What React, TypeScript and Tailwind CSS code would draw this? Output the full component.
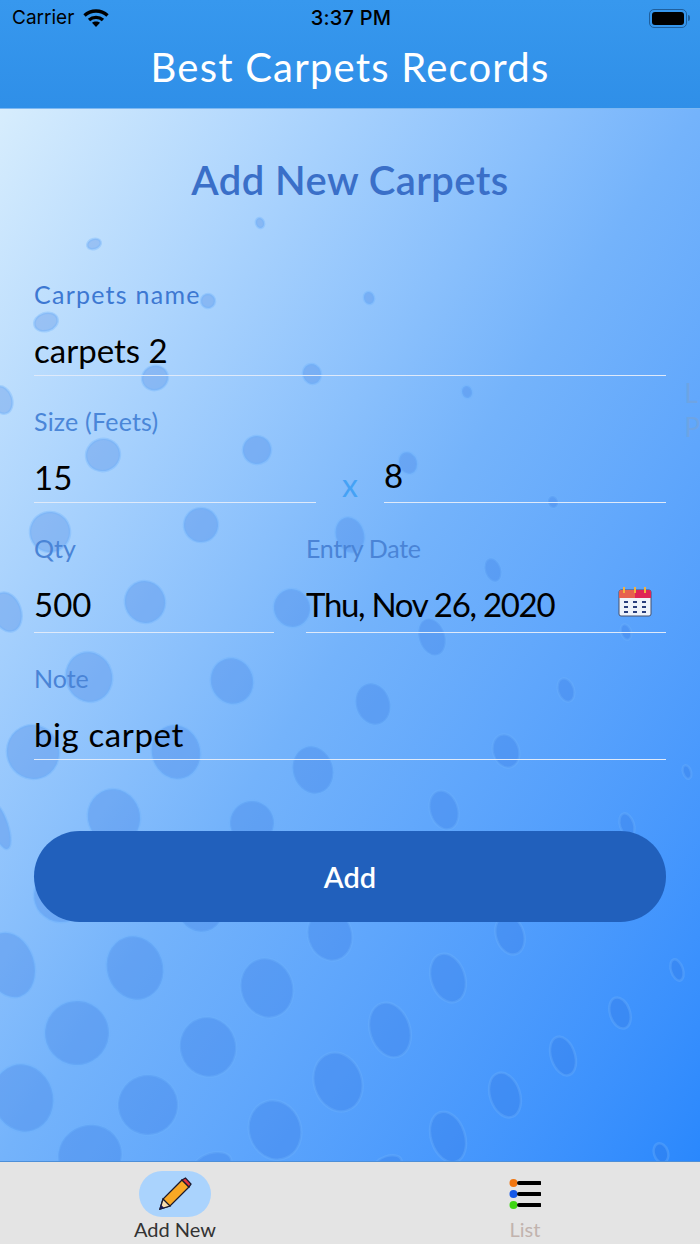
// Spots on the background, in page coordinates: cx, cy, rx, ry
const blobs: [number, number, number, number][] = [
  [260, 223, 4, 5], [94, 244, 7, 5], [208, 301, 7, 7], [46, 322, 12, 9], [369, 298, 5, 6], [155, 378, 13, 12],
  [312, 374, 9, 10], [467, 392, 5, 6], [2, 400, 10, 14], [103, 455, 17, 16], [257, 450, 14, 14], [408, 463, 9, 11],
  [553, 502, 5, 6], [50, 532, 20, 20], [201, 525, 17, 17], [350, 535, 14, 18], [493, 570, 8, 12], [7, 612, 14, 20],
  [145, 602, 20, 21], [292, 608, 18, 19], [432, 637, 13, 19], [626, 632, 5, 8], [89, 677, 23, 25], [232, 681, 21, 23],
  [373, 704, 17, 21], [566, 690, 8, 12], [33, 752, 26, 27], [176, 752, 24, 27], [506, 751, 13, 17], [687, 772, 4, 7],
  [313, 770, 20, 24], [444, 810, 14, 20], [114, 817, 26, 28], [252, 823, 22, 22], [627, 825, 7, 12], [0, 826, 8, 24],
  [62, 895, 28, 27], [200, 905, 24, 27], [330, 935, 22, 26], [510, 935, 14, 20], [448, 978, 17, 25], [677, 970, 6, 11],
  [390, 1030, 20, 28], [620, 1013, 10, 16], [563, 1056, 12, 20], [338, 1082, 24, 30], [505, 1095, 15, 23], [448, 1137, 17, 26],
  [388, 1164, 14, 8], [661, 1153, 7, 10], [10, 965, 24, 33], [135, 968, 28, 32], [267, 988, 26, 30], [77, 1033, 32, 32],
  [208, 1047, 28, 30], [23, 1098, 30, 34], [148, 1105, 30, 30], [275, 1130, 26, 30], [90, 1155, 32, 30], [212, 1165, 20, 12],
];

const font = { fontFamily: "Lato, 'Noto Sans', sans-serif" };

function Field({
  label,
  value,
  labelClass = "",
  valueClass = "",
  className = "",
}: {
  label: string;
  value: string;
  labelClass?: string;
  valueClass?: string;
  className?: string;
}) {
  return (
    <div className={className}>
      <div className={`text-[25px] leading-[30px] ${labelClass}`}>{label}</div>
      <div className={`border-b border-[#dfeafa] text-[33px] text-black ${valueClass}`}>{value}</div>
    </div>
  );
}

export default function App() {
  return (
    <div className="flex h-[1244px] w-[700px] flex-col overflow-hidden" style={font}>
      <header className="h-[109px] border-b border-[#7db8f2] bg-gradient-to-b from-[#3798ee] to-[#2f8fe8]">
        <div className="flex h-[36px] items-center justify-between pr-[10px] pl-[12px] font-['Inter'] text-black">
          <div className="flex w-[200px] items-center gap-[9px] text-[19px]">
            Carrier
            <svg width="26" height="20" viewBox="0 0 26 20" fill="none" stroke="#000" strokeWidth="3.4">
              <path d="M1.5 7.5C8 1.5 18 1.5 24.5 7.5" />
              <path d="M6 12C10 8.5 16 8.5 20 12" />
              <path d="M13 19L9 14.8C11 13 15 13 17 14.8Z" fill="#000" stroke="none" />
            </svg>
          </div>
          <div className="text-[20px] font-medium tracking-[0.2px]">3:37 PM</div>
          <div className="flex w-[200px] items-center justify-end">
            <div className="h-[19px] w-[38px] rounded-[5px] border border-[#1f5f9d] p-[2px]">
              <div className="h-full rounded-[3px] bg-black" />
            </div>
            <div className="ml-[1px] h-[6px] w-[2px] rounded-r bg-[#1f5f9d]" />
          </div>
        </div>
        <h1 className="text-center text-[40px] leading-[62px] font-normal tracking-[1.2px] text-white">Best Carpets Records</h1>
      </header>

      <main className="relative flex-1 bg-gradient-to-br from-[#d7edfd] via-[#74b3fb] to-[#2a88fd]">
        <svg className="absolute inset-0" width="700" height="1052" viewBox="0 109 700 1052">
          {blobs.map(([cx, cy, rx, ry]) => (
            <ellipse
              key={`${cx}-${cy}`}
              cx={cx}
              cy={cy}
              rx={rx}
              ry={ry}
              transform={`rotate(-18 ${cx} ${cy})`}
              fill="#2f6fdc"
              fillOpacity="0.26"
              stroke="#6db2fb"
              strokeOpacity="0.35"
              strokeWidth="2.5"
            />
          ))}
        </svg>
        <div className="absolute top-[267px] right-0 text-[26px] leading-[34px] text-[#6ea4e4]">
          L<br />P
        </div>

        <div className="relative px-[34px]">
          <h2 className="pt-[46px] text-center text-[40px] leading-[50px] font-semibold tracking-[0.4px] text-[#3a6fc8]">Add New Carpets</h2>
          <Field
            label="Carpets name"
            value="carpets 2"
            labelClass="text-[#3d78d2] tracking-[1.25px]"
            valueClass="mt-[17px] h-[50px] leading-[48px]"
            className="mt-[74px]"
          />
          <div className="mt-[30px] text-[25px] leading-[30px] tracking-[0.2px] text-[#4a86d8]">Size (Feets)</div>
          <div className="mt-[17px] flex items-end">
            <div className="h-[50px] w-[282px] border-b border-[#dfeafa] text-[33px] leading-[48px] text-black">15</div>
            <div className="mb-[3px] w-[68px] text-center text-[32px] leading-[30px] text-[#45a2f5]">x</div>
            <div className="h-[50px] flex-1 border-b border-[#dfeafa] text-[33px] leading-[44px] text-black">8</div>
          </div>
          <div className="mt-[30px] flex gap-[32px]">
            <Field
              label="Qty"
              value="500"
              labelClass="text-[#4a84d6]"
              valueClass="mt-[19px] h-[51px] leading-[44px]"
              className="w-[240px]"
            />
            <div className="relative flex-1">
              <Field
                label="Entry Date"
                value="Thu, Nov 26, 2020"
                labelClass="text-[#4a84d6] tracking-[-0.3px]"
                valueClass="mt-[19px] h-[51px] leading-[44px] tracking-[-1.3px]"
              />
              <svg className="absolute top-[54px] right-[14px]" width="34" height="30" viewBox="0 0 34 30">
                <rect x="1" y="3" width="32" height="26" rx="2" fill="#eef3fb" stroke="#44506e" />
                <path d="M1 5a2 2 0 0 1 2-2h14v8H1Z" fill="#e7604f" />
                <path d="M17 3h14a2 2 0 0 1 2 2v6H17Z" fill="#df2457" />
                <path d="M6 0v6M17 0v6M27 0v6" stroke="#f4b23f" strokeWidth="2" />
                <path d="M6 15h4M15 15h4M24 15h4M6 20h4M15 20h4M24 20h4M6 25h4M15 25h4M24 25h4" stroke="#2a3f7d" strokeWidth="2" />
              </svg>
            </div>
          </div>
          <Field
            label="Note"
            value="big carpet"
            labelClass="text-[#4a84d6]"
            valueClass="mt-[17px] h-[50px] leading-[48px] tracking-[0.6px]"
            className="mt-[30px]"
          />
          <button className="mt-[71px] h-[91px] w-full rounded-full bg-[#2160bc] text-[29px] font-semibold text-white">Add</button>
        </div>
      </main>

      <nav className="grid h-[83px] grid-cols-2 border-t border-[#4d8fd8] bg-[#e4e4e4]">
        <div className="flex flex-col items-center pt-[9px]">
          <div className="flex h-[46px] w-[72px] items-center justify-center rounded-full bg-[#aad3fd]">
            <svg width="34" height="34" viewBox="0 0 34 34">
              <path d="M2 32L5 22L24 3L31 10L12 29Z" fill="#f9a825" stroke="#1a1a2e" strokeWidth="1.3" />
              <path d="M24 3L27.5 1L33 7L31 10Z" fill="#e5333f" stroke="#1a1a2e" strokeWidth="1.3" />
              <path d="M5 22L12 29L2 32Z" fill="#f7dcae" stroke="#1a1a2e" strokeWidth="1.3" />
              <path d="M2 32L3.2 28L6 30.8Z" fill="#1a1a5e" />
            </svg>
          </div>
          <div className="text-[20px] leading-[25px] text-[#333]">Add New</div>
        </div>
        <div className="flex flex-col items-center pt-[9px]">
          <div className="flex h-[46px] items-center">
            <svg width="32" height="32" viewBox="0 0 32 32">
              <circle cx="4.5" cy="5" r="4" fill="#f0750f" />
              <circle cx="4.5" cy="16" r="4" fill="#1558e8" />
              <circle cx="4.5" cy="27" r="4" fill="#3ed614" />
              <path d="M10 5h21M10 16h21M10 27h21" stroke="#000" strokeWidth="4" strokeLinecap="round" />
            </svg>
          </div>
          <div className="text-[20px] leading-[25px] text-[#c1b3ae]">List</div>
        </div>
      </nav>
    </div>
  );
}
